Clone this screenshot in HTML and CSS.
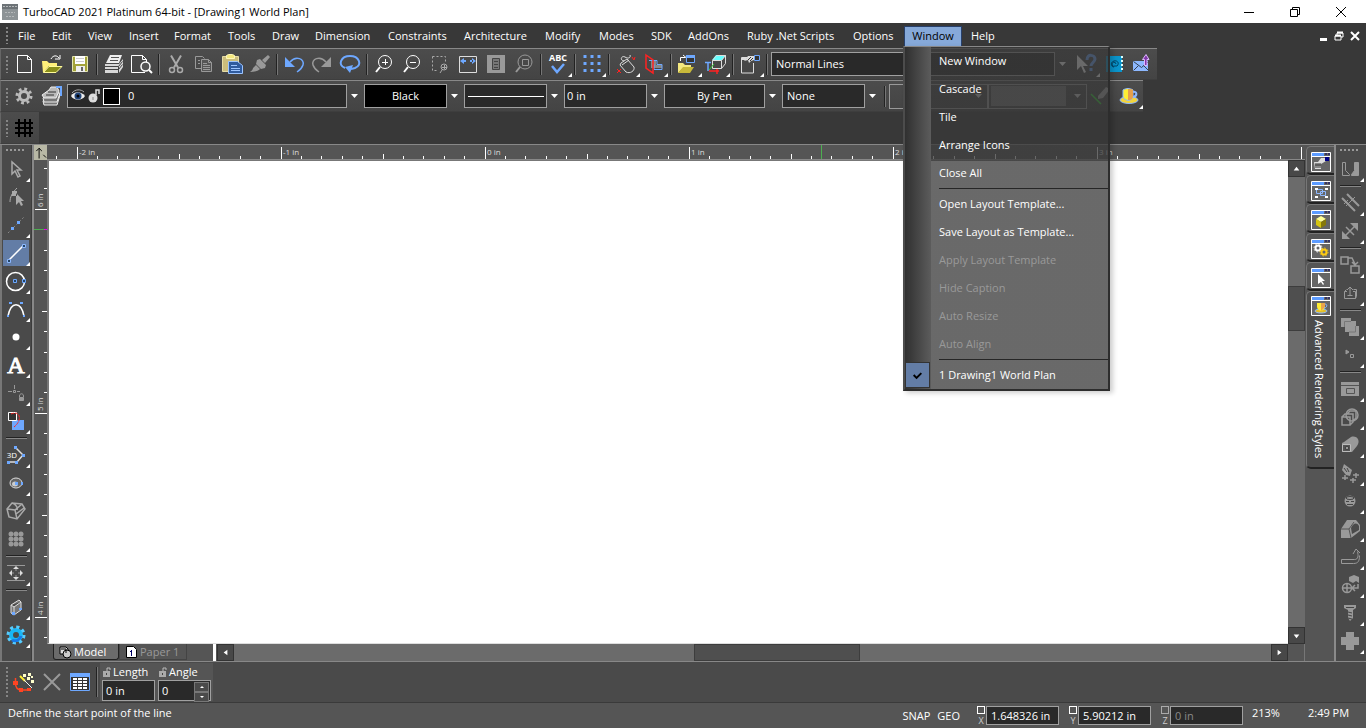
FILE: index.html
```html
<!DOCTYPE html>
<html lang="en">
<head>
<meta charset="utf-8">
<title>TurboCAD 2021 Platinum 64-bit - [Drawing1 World Plan]</title>
<link rel="stylesheet" href="styles.css">
</head>
<body>
<header class="titlebar">
  <svg class="app-icon" viewBox="0 0 16 16"><path fill="#6d7377" d="M0 0h16v5H0z"/><path fill="#8d9396" d="M0 5h16v11H0z"/><path stroke="#b5b8ba" d="M1 2.500h14M3 8.500h10M4 12.500h8" stroke-dasharray="2 1"/></svg>
  <h1>TurboCAD 2021 Platinum 64-bit - [Drawing1 World Plan]</h1>
  <div class="win-buttons">
    <button aria-label="Minimize"><svg viewBox="0 0 12 12"><path d="M1 6.500h10"/></svg></button>
    <button aria-label="Restore"><svg viewBox="0 0 12 12"><path d="M1.500 3.500h7v7h-7zM3.500 3.500v-2h7v7h-2"/></svg></button>
    <button aria-label="Close"><svg viewBox="0 0 12 12"><path d="M1 1l10 10M11 1L1 11"/></svg></button>
  </div>
</header>

<nav class="menubar">
  <span class="grip"></span>
  <div class="menus">
    <button>File</button><button>Edit</button><button>View</button><button>Insert</button><button>Format</button><button>Tools</button><button>Draw</button><button>Dimension</button><button>Constraints</button><button>Architecture</button><button>Modify</button><button>Modes</button><button>SDK</button><button>AddOns</button><button>Ruby .Net Scripts</button><button>Options</button>
    <div class="open-menu">
      <button class="active">Window</button>
      <div class="dropdown" role="menu">
        <button role="menuitem">New Window</button>
        <button role="menuitem">Cascade</button>
        <button role="menuitem">Tile</button>
        <button role="menuitem">Arrange Icons</button>
        <button role="menuitem">Close All</button>
        <hr>
        <button role="menuitem">Open Layout Template...</button>
        <button role="menuitem">Save Layout as Template...</button>
        <button role="menuitem" disabled>Apply Layout Template</button>
        <button role="menuitem" disabled>Hide Caption</button>
        <button role="menuitem" disabled>Auto Resize</button>
        <button role="menuitem" disabled>Auto Align</button>
        <hr>
        <button role="menuitem" class="checked"><svg viewBox="0 0 24 24"><path d="M8 12l3 3 5-5" fill="none" stroke="#000" stroke-width="2"/></svg>1 Drawing1 World Plan</button>
      </div>
    </div>
    <button>Help</button>
  </div>
  <div class="mdi">
    <button aria-label="Minimize drawing"><svg viewBox="0 0 12 12"><path d="M3 9.500h7" stroke-width="3"/></svg></button>
    <button aria-label="Restore drawing"><svg viewBox="0 0 12 12"><path d="M2 6h6v4H2zM4 5V3h6v4H8" stroke-width="1"/><path d="M2 5.500h6M4 2.500h6" stroke-width="2"/></svg></button>
    <button aria-label="Close drawing"><svg viewBox="0 0 12 12"><path d="M2 2l8 8M10 2l-8 8" stroke-width="2"/></svg></button>
  </div>
</nav>

<div class="toolbar standard">
  <span class="grip"></span>
  <button aria-label="New"><svg viewBox="0 0 24 24" stroke="#fff"><path d="M5.500 3.500h10l4 4v13h-14zM15.500 3.500v4h4"/></svg></button>
  <button aria-label="Open"><svg viewBox="0 0 24 24"><path fill="#fff07a" d="M2 9h5l2 2h8v3H9l-6 7z"/><path fill="#8b8f1a" stroke="#fffb9a" d="M9 14.500h13l-6 6H3.500z"/><path stroke="#fff" d="M11 7c2-4 6-4 8-1m-4 1h5V3"/></svg></button>
  <button aria-label="Save"><svg viewBox="0 0 24 24"><path fill="#a3a33a" stroke="#e6e6b0" d="M4.500 4.500h15v15h-15z"/><path fill="#fff" d="M7 4h10v8H7z"/><path stroke="#ccc" d="M8 6.500h8M8 9.500h8"/><path fill="#eee" d="M8 14h9v6H8z"/><path fill="#666" d="M13 15h2v4h-2z"/></svg></button>
  <i class="sep"></i>
  <button aria-label="Print"><svg viewBox="0 0 24 24"><path fill="#eee" d="M8 3h12l-3 8H4z"/><path stroke="#555" d="M9 5.500h8M8 8.500h8"/><path fill="#d8d8d8" d="M3 12h14l4-5v8l-4 6H3z"/><path stroke="#444" d="M3 14.500h13.500l4-5M3 17.500h13.500l4-5M16.500 14.500V21"/></svg></button>
  <button aria-label="Print preview"><svg viewBox="0 0 24 24" stroke="#fff"><path d="M15 20.500H1.500v-17h11l4 4v3M12.500 3.500v4h4"/><circle cx="15.500" cy="14.500" r="4.500" fill="#555" stroke-width="1.500"/><path d="M19 18l3 3" stroke-width="2"/></svg></button>
  <i class="sep"></i>
  <button aria-label="Cut"><svg viewBox="0 0 24 24" stroke="#aaa"><path stroke-width="2" d="M7 3.500l7 12M17 3.500l-7 12"/><circle cx="8" cy="18" r="2.500" stroke-width="1.500"/><circle cx="16" cy="18" r="2.500" stroke-width="1.500"/></svg></button>
  <button aria-label="Copy"><svg viewBox="0 0 24 24" stroke="#999"><path d="M9 16.500H3.500v-12h7l2 2"/><path fill="#555" d="M9.500 7.500h7l3 3v9h-10zM16.500 7.500v3h3M6 8.500h2M6 11.500h2M11 13.500h7M11 15.500h7M11 11.500h4M11 17.500h7"/></svg></button>
  <button aria-label="Paste"><svg viewBox="0 0 24 24"><path fill="#cbbd7c" stroke="#e6dca6" d="M2.500 4.500h16v15h-16z"/><path fill="#f4e87f" stroke="#fff8b8" d="M6.500 6.500v-3l2-1h4l2 1v3z"/><path fill="#2f5b9e" stroke="#9cc4ff" d="M8.500 9.500h9l5 4v8h-14z"/><path stroke="#9cc4ff" d="M11 13.500h6M11 16.500h9M11 18.500h9"/></svg></button>
  <button aria-label="Format painter"><svg viewBox="0 0 24 24"><path fill="#999" d="M20 3l2 2-5 6-3-3zM9 8l3-1 6 6-1 3-4 1-5-5zM8 13l4 4c-2 2-6 3-10 3 1-1 3-2 3-4z"/></svg></button>
  <i class="sep"></i>
  <button aria-label="Undo"><svg viewBox="0 0 24 24"><path d="M8 10c6-7 15-3 13 3-1 3-3 5-6 7" stroke="#6ea8ff" stroke-width="1.500"/><path fill="#6ea8ff" d="M3 5v10h10z"/></svg></button>
  <button aria-label="Redo"><svg viewBox="0 0 24 24"><path d="M16 10C10 3 1 7 3 13c1 3 3 5 6 7" stroke="#999" stroke-width="1.500"/><path fill="#999" d="M21 5v10H11z"/></svg></button>
  <button aria-label="Repeat"><svg viewBox="0 0 24 24"><path d="M7 16C-1 13 3 4 12 4s13 9 5 12l-4 1" stroke="#6ea8ff" stroke-width="2"/><path fill="#6ea8ff" d="M7 15l8-2-3 8z"/></svg></button>
  <i class="sep"></i>
  <button aria-label="Zoom in"><svg viewBox="0 0 24 24" stroke="#fff"><circle cx="13" cy="10" r="6.500"/><path d="M10 10.500h6M13.500 7v6"/><path stroke-width="2" d="M8 15l-4 5"/></svg></button>
  <button aria-label="Zoom out"><svg viewBox="0 0 24 24" stroke="#fff"><circle cx="13" cy="10" r="6.500"/><path d="M10 10.500h6"/><path stroke-width="2" d="M8 15l-4 5"/></svg></button>
  <button aria-label="Zoom window"><svg viewBox="0 0 24 24" stroke="#aaa"><path stroke-dasharray="2 2" d="M4.500 4.500h13v6M4.500 4.500v14h6"/><circle cx="16" cy="15" r="3"/><path d="M16.500 13v4M14 15.500h5M14 18l-2 3"/></svg></button>
  <button aria-label="Zoom extents"><svg viewBox="0 0 24 24"><path stroke="#ddd" d="M3.500 4.500h17v16h-17z"/><path fill="#6ea8ff" d="M4 9l4-3v6zM20 9l-4-3v6zM7 8h3v2H7zM14 8h3v2h-3z"/></svg></button>
  <button aria-label="Full page"><svg viewBox="0 0 24 24"><path fill="#999" d="M3 3h18v18H3z"/><path fill="#777" stroke="#444" d="M8.500 6.500h7v11h-7zM10 9.500h4M10 12.500h4M10 15.500h4"/></svg></button>
  <button aria-label="Zoom selection"><svg viewBox="0 0 24 24" stroke="#999"><circle cx="13" cy="10" r="7"/><path d="M10.500 7.500h6v6h-6z"/><path stroke-width="2" d="M8 15l-4 5"/></svg></button>
  <i class="sep"></i>
  <button class="fly" aria-label="Spelling"><svg viewBox="0 0 24 24"><text x="12" y="9" class="abc">ABC</text><path d="M6 14l5 6 7-8" stroke="#6ea8ff" stroke-width="2.500"/></svg></button>
  <i class="sep"></i>
  <button class="fly" aria-label="Grid"><svg viewBox="0 0 24 24"><path stroke="#6ea8ff" stroke-width="3" stroke-dasharray="3 4" d="M3.500 4.500h18M3.500 11.500h18M3.500 18.500h18"/></svg></button>
  <i class="sep"></i>
  <button class="fly" aria-label="Mouse setup"><svg viewBox="0 0 24 24" stroke="#ddd"><path d="M7 11l6-4 7 8c1 4-4 7-8 5l-6-7zM8 13l7-5M10 9C5 8 8 3 11 5s6 1 5-2"/><path stroke="#f22" d="M18 5l2 3 1-3M3 17l4 4M7 17l-4 4"/></svg></button>
  <button class="fly" aria-label="Section"><svg viewBox="0 0 24 24"><path fill="#888" d="M9 9h5v4h6v3H9z"/><path stroke="#6ea8ff" d="M7 8.500h8v4h5v5h-8v-5"/><path stroke="#f22" stroke-width="1.500" d="M4 3l7 5v13l-7-5z"/></svg></button>
  <i class="sep"></i>
  <button class="fly" aria-label="Insert file"><svg viewBox="0 0 24 24"><path fill="#f4e87f" d="M2 11h5l2 2h6v2H8l-6 6z"/><path fill="#c8b93a" d="M7 15h11l-4 6H2z"/><path fill="#333" stroke="#6ea8ff" d="M10.500 3.500h8v7h-8z"/><path fill="#6ea8ff" d="M10 3h9v3h-9z"/><path stroke="#fff" d="M4.500 9V5.500h5M7 3l3 2.500"/></svg></button>
  <button class="fly" aria-label="Work plane"><svg viewBox="0 0 24 24"><path fill="#6ff" d="M12 3h10l-4 5H8z"/><path stroke="#ddd" d="M8.500 8.500h9v8h-9zM8.500 8.500l4-5h9v8l-4 5M21.500 3.500l-4 5"/><path stroke="#6ea8ff" stroke-width="1.500" d="M4 19V10M1 10.500h6"/><path stroke="#f22" stroke-width="1.500" d="M5 19h10M13 17v5"/><path stroke="#3c3" d="M5 18l5-6"/></svg></button>
  <i class="sep"></i>
  <button class="fly" aria-label="Properties"><svg viewBox="0 0 24 24"><path stroke="#ddd" d="M15.500 11v10h-12V5.500H10"/><path stroke="#ddd" stroke-width="2" d="M3 7h5"/><path fill="#ddd" d="M6 9l4-5h6v4l-3 1-2 2-1-3z"/><path fill="#333" stroke="#6ea8ff" d="M16.500 3.500h5v5h-5z"/><path stroke="#333" d="M10 8l3-3M12 9l3-3"/></svg></button>
  <i class="sep"></i>
  <label class="combo style-combo"><select aria-label="Style"><option>Normal Lines</option></select></label>
  <button class="fly" aria-label="Context help"><svg viewBox="0 0 24 24"><path fill="#fff" d="M3 3v15l4-4 3 7 2-1-3-6h5z"/><path stroke="#6ea8ff" stroke-width="3" d="M13 8c0-7 8-5 8-1 0 3-4 4-4 7M17 16v3"/></svg></button>
  <button aria-label="Content center"><svg viewBox="0 0 24 24"><path fill="#0a95cc" d="M4 4h16v16H4z"/><path stroke="#dff" stroke-width="2" stroke-dasharray="2 2" d="M20 4v16"/><path stroke="#046" d="M14 12a2 2 0 1 0-1 2h2c3-3 0-6-3-5-4 1-3 6 0 6"/></svg></button>
  <button aria-label="Send mail"><svg viewBox="0 0 24 24"><path fill="#8db8ff" d="M3 9h15v10H3z"/><path stroke="#345" d="M3.500 9.500l8 6 7-6M3.500 18.500l5-5M18.500 18.500l-5-5"/><path fill="#8036a8" stroke="#dcb8ff" d="M14.500 13.500v-6h-2l3.500-5 3 5h-2v6z"/></svg></button>
</div>

<div class="toolbar properties">
  <span class="grip"></span>
  <button aria-label="Settings"><svg viewBox="0 0 24 24"><circle cx="12" cy="12" r="4.500" stroke="#bbb" stroke-width="3"/><circle cx="12" cy="12" r="7" stroke="#bbb" stroke-width="3" stroke-dasharray="2.750 2.750"/></svg></button>
  <button aria-label="Layers"><svg viewBox="0 0 24 24"><path fill="#777" stroke="#eee" d="M3 17l5-6h12l-3 10H4z"/><path fill="#777" stroke="#eee" d="M3 14l5-5h12l-3 9H4z"/><path fill="#bbb" stroke="#eee" d="M2 11l7-5 2-3h6l2 4-3 7H4z"/><path stroke="#333" d="M6 11h8M8 8h8"/><path stroke="#6ea8ff" stroke-width="2" d="M16 3h5v9"/></svg></button>
  <label class="combo layer-combo">
    <span class="layer-state">
      <svg viewBox="0 0 16 16"><path fill="#eee" d="M1 8c3-5 10-5 14 0-3 5-11 5-14 0z"/><circle cx="8" cy="8" r="3.500" fill="#247"/><circle cx="8" cy="8" r="1.500" fill="#000"/><path stroke="#aaa" d="M2 5c3-4 9-4 12-1"/></svg>
      <svg viewBox="0 0 16 16"><circle cx="7" cy="10" r="4.500" fill="#ddd"/><path d="M10 7V2h3v4" stroke="#ddd" stroke-width="1.500"/><path d="M7 9v3" stroke="#888"/></svg>
      <i class="swatch"></i>
    </span>
    <select aria-label="Layer"><option>0</option></select></label>
  <label class="combo pen-color"><select aria-label="Pen color"><option>Black</option></select></label>
  <label class="combo pen-pattern"><select aria-label="Pen pattern"><option></option></select></label>
  <label class="combo pen-width"><select aria-label="Pen width"><option>0 in</option></select></label>
  <label class="combo brush-color"><select aria-label="Brush color"><option>By Pen</option></select></label>
  <label class="combo brush-pattern"><select aria-label="Brush pattern"><option>None</option></select></label>
  <i class="sep"></i>
  <label class="boxed"><select aria-label="Material"><option></option></select></label>
  <label class="boxed filled"><select aria-label="Luminance"><option></option></select></label>
  <button aria-label="Pick style"><svg viewBox="0 0 24 24"><path fill="#aaa" d="M9 12l8-9 4 2-7 9-5 1z"/><path stroke="#3d3" stroke-width="1.500" d="M2 10l10 10"/></svg></button>
  <button class="fly" aria-label="Render"><svg viewBox="0 0 24 24"><ellipse cx="12" cy="16" rx="9" ry="3.500" fill="#f3d43b" stroke="#8db8ff"/><path fill="#fe3" stroke="#8db8ff" d="M6 6c3-2 7-2 10 0v7c-2 5-8 4-10 0z"/><path fill="#e5a04c" d="M11 5c2 0 4 0 5 1v7c-1 3-3 3-5 3z"/><path stroke="#8db8ff" stroke-width="2" d="M16 8c4-1 5 4 0 5"/></svg></button>
</div>

<div class="toolbar gridbar">
  <span class="grip"></span>
  <button aria-label="Toggle grid"><svg viewBox="0 0 24 24"><path stroke="#000" stroke-width="2" d="M7 3v18M13 3v18M18 3v18M3 7h18M3 12h18M3 17h18"/></svg></button>
</div>

<main>
  <aside class="tools left">
    <span class="grip across"></span>
    <button class="fly" aria-label="Select"><svg viewBox="0 0 24 24" stroke="#aaa"><path stroke-width="1.500" d="M8 5v12l3-3 3 6 2-1-3-6h4z"/></svg></button>
    <button aria-label="Edit node"><svg viewBox="0 0 24 24" stroke="#aaa"><path d="M6 17c0-5 2-9 7-14"/><path fill="#aaa" stroke="none" d="M8 6h5v5H8zM12 8v12l3-3 2 4 2-1-2-4h3z"/></svg></button>
    <button class="fly" aria-label="Construction line"><svg viewBox="0 0 24 24"><path stroke="#888" stroke-dasharray="2 2" d="M4 20L20 4"/><path fill="#6ea8ff" d="M7 14h3v3H7zM13 8h3v3h-3z"/></svg></button>
    <button class="fly selected" aria-label="Line"><svg viewBox="0 0 24 24"><path stroke="#fff" stroke-width="1.500" d="M5 19L19 5"/><path fill="#246" stroke="#8db8ff" d="M3.500 18.500h3v3h-3zM18.500 3.500h3v3h-3z"/></svg></button>
    <button class="fly" aria-label="Circle"><svg viewBox="0 0 24 24"><circle cx="11.500" cy="12.500" r="9" stroke="#fff" stroke-width="1.500"/><path fill="#246" stroke="#6ea8ff" d="M9.500 10.500h3v3h-3zM18.500 10.500h3v3h-3z"/></svg></button>
    <button class="fly" aria-label="Curve"><svg viewBox="0 0 24 24"><path stroke="#fff" stroke-width="1.500" d="M4 19C7 4 17 4 20 19"/><path fill="#6ea8ff" d="M3 18h2v2H3zM19 18h2v2h-2zM5 5h3v2H5zM16 5h3v2h-3z"/></svg></button>
    <button class="fly" aria-label="Point"><svg viewBox="0 0 24 24"><circle cx="12" cy="12" r="3.500" fill="#fff"/></svg></button>
    <button class="fly" aria-label="Text"><span class="letter-a">A</span></button>
    <button class="fly" aria-label="Constraint"><svg viewBox="0 0 24 24" stroke="#999"><path d="M4 10.500h4M10.500 4v4M13 10.500h3M9.500 9.500h2v2h-2z"/><path d="M15.500 16v-1c0-3 4-3 4 0v1"/><path fill="#999" d="M15.500 16.500h4v3h-4z"/></svg></button>
    <button class="fly" aria-label="Modify"><svg viewBox="0 0 24 24"><path fill="#6ea8ff" d="M8 11h12v10H8z"/><path fill="#333" stroke="#fff" d="M4.500 3.500h8v8h-8z"/><path stroke="#f22" d="M7 5c9-4 12 6 3 13" stroke-dasharray="3 1"/></svg></button>
    <i class="rule"></i>
    <button class="fly" aria-label="3D polyline"><svg viewBox="0 0 24 24"><path stroke="#ddd" stroke-width="1.500" d="M4 19h9l6-7-7-7"/><path fill="#6ea8ff" d="M3 18h3v3H3zM11 18h3v3h-3zM18 11h3v3h-3zM10 3h3v3h-3z"/><text x="8" y="15" class="three-d">3D</text></svg></button>
    <button class="fly" aria-label="Sphere"><svg viewBox="0 0 24 24"><ellipse cx="12" cy="12" rx="6" ry="5" fill="#666" stroke="#ddd"/><ellipse cx="11" cy="13" rx="3" ry="2.500" fill="#ccc"/><path fill="#6ea8ff" d="M11 11h3v3h-3zM17 11h2v3h-2z"/></svg></button>
    <button class="fly" aria-label="Surface"><svg viewBox="0 0 24 24" stroke="#aaa" stroke-width="1.500"><path d="M3 10l5-6 10 1 3 5-8 10-8-2zM3 10l8 1 2 9M11 11l7-6M8 4c4 1 6 5 5 7M12 15l8-6"/></svg></button>
    <button class="fly" aria-label="Pattern"><svg viewBox="0 0 24 24" fill="#999"><circle cx="7" cy="7" r="2.500"/><circle cx="12" cy="7" r="2.500"/><circle cx="17" cy="7" r="2.500"/><circle cx="7" cy="12" r="2.500"/><circle cx="12" cy="12" r="2.500"/><circle cx="17" cy="12" r="2.500"/><circle cx="7" cy="17" r="2.500"/><circle cx="12" cy="17" r="2.500"/><circle cx="17" cy="17" r="2.500"/></svg></button>
    <i class="rule"></i>
    <button class="fly" aria-label="Align"><svg viewBox="0 0 24 24" stroke="#999"><path d="M3 4.500h18M3 19.500h18M6 12h4M14 12h4M12 6v4M12 14v4"/><path fill="#ddd" stroke="none" d="M9 8l3-3 3 3zM9 16l3 3 3-3zM8 9l-3 3 3 3zM16 9l3 3-3 3z"/></svg></button>
    <i class="rule"></i>
    <button class="fly" aria-label="Wall"><svg viewBox="0 0 24 24"><path fill="#777" stroke="#ddd" d="M7 10l8-5 2 2v8l-7 5-3-2zM10 12v8M7 10l3 2 7-5"/><path fill="#6ea8ff" d="M8 17h3v3H8zM15 13h3v2h-3z"/></svg></button>
    <button class="fly" aria-label="Mechanism"><svg viewBox="0 0 24 24"><circle cx="12" cy="12" r="5" stroke="#18b6f5" stroke-width="4"/><circle cx="12" cy="12" r="8" stroke="#5cf" stroke-width="3" stroke-dasharray="3.150 3.133"/><path stroke="#1678e8" stroke-width="3" d="M8 17c4 2 8 0 9-4"/></svg></button>
  </aside>

  <section class="drawing">
    <div class="corner"><svg viewBox="0 0 14 14"><path d="M5.500 14V3M2.500 6l3-3 3 3" stroke="#000"/><path d="M10 10l3 3" stroke="#000"/></svg></div>
    <div class="ruler-h">
      <svg aria-label="Horizontal ruler">
        <defs>
          <path id="inch-h" d="M.5 2v12M20.500 11v3M40.500 11v3M61.500 11v3M81.500 11v3M102.500 9v5M122.500 11v3M142.500 11v3M163.500 11v3M183.500 11v3"/>
          <path id="inch-v" d="M1 .5h12M10 20.500h3M10 41.500h3M10 61.500h3M10 81.500h3M8 102.500h5M10 122.500h3M10 143.500h3M10 163.500h3M10 183.500h3"/>
        </defs>
        <g stroke="#fff"><use href="#inch-h" x="-174"/><use href="#inch-h" x="30"/><use href="#inch-h" x="234"/><use href="#inch-h" x="438"/><use href="#inch-h" x="642"/><use href="#inch-h" x="846"/><use href="#inch-h" x="1050"/><use href="#inch-h" x="1254"/></g>
        <path stroke="#4caf50" d="M774.500 0v14"/>
        <g class="ruler-text"><text x="32" y="10">-2 in</text><text x="236" y="10">-1 in</text><text x="440" y="10">0 in</text><text x="644" y="10">1 in</text><text x="848" y="10">2 in</text><text x="1052" y="10">3 in</text></g>
      </svg>
    </div>
    <div class="ruler-v">
      <svg aria-label="Vertical ruler">
        <g stroke="#fff"><use href="#inch-v" y="-155"/><use href="#inch-v" y="49"/><use href="#inch-v" y="253"/><use href="#inch-v" y="457"/></g>
        <path stroke="#4caf50" d="M0 69.500h10"/><path stroke="#e0e" d="M10 69.500h3"/>
        <g class="ruler-text"><text transform="translate(9 47) rotate(-90)">6 in</text><text transform="translate(9 251) rotate(-90)">5 in</text><text transform="translate(9 455) rotate(-90)">4 in</text></g>
      </svg>
    </div>
    <div class="canvas"></div>
    <div class="vscroll">
      <button aria-label="Scroll up"><svg viewBox="0 0 16 16"><path d="M5 10l3-4 3 4z"/></svg></button>
      <i class="before"></i><i class="thumb"></i><i class="after"></i>
      <button aria-label="Scroll down"><svg viewBox="0 0 16 16"><path d="M5 7l3 4 3-4z"/></svg></button>
    </div>
    <div class="sheetbar">
      <div class="sheets">
        <button class="current"><svg viewBox="0 0 14 14"><path fill="#ddd" stroke="#000" d="M2 2h6l2 2v5H2z"/><circle cx="9" cy="9" r="4" fill="#ccc" stroke="#000"/><path stroke="#000" d="M3 4h5v4"/></svg>Model</button>
        <button><svg viewBox="0 0 14 14"><path fill="#fff" stroke="#000" d="M2.500 1.500h7l3 3v8h-10z"/><path stroke="#006" d="M7.500 5v6M6 6.500h2"/></svg>Paper 1</button>
      </div>
      <div class="hscroll">
        <button aria-label="Scroll left"><svg viewBox="0 0 16 16"><path d="M10 5L6 8l4 3z"/></svg></button>
        <i class="before"></i><i class="thumb"></i><i class="after"></i>
        <button aria-label="Scroll right"><svg viewBox="0 0 16 16"><path d="M6 5l4 3-4 3z"/></svg></button>
      </div>
      <i class="size-corner"></i>
    </div>
  </section>

  <aside class="dock">
    <button aria-label="Selection info"><svg viewBox="0 0 20 20"><use href="#pane"/><path fill="#ddd" d="M3 10h4l3-4h5v3l-5 3v5H4z"/><path fill="#008" d="M14 5h4v4h-4z"/><path stroke="#333" d="M5 11v5M7 11v5M9 11v5M4 13h6"/></svg></button>
    <button aria-label="Blocks"><svg viewBox="0 0 20 20"><use href="#pane"/><path stroke="#8db8ff" d="M5.500 8.500h6v4h-6zM9.500 10.500h5v4h-5z"/><path fill="#fff" d="M4 7h3v2H4zM14 7h3v2h-3zM4 15h3v2H4zM14 15h3v2h-3z"/></svg></button>
    <button aria-label="Library"><svg viewBox="0 0 20 20"><use href="#pane"/><path fill="#ff9" d="M5 9l5-3 5 3-5 3z"/><path fill="#d4c411" d="M5 9l5 3v6l-5-3z"/><path fill="#86790b" d="M15 9l-5 3v6l5-3z"/></svg></button>
    <button aria-label="Internet palette"><svg viewBox="0 0 20 20"><use href="#pane"/><circle cx="7" cy="9" r="2.500" stroke="#fff" stroke-width="2"/><circle cx="7" cy="9" r="4" stroke="#fff" stroke-dasharray="1.500 1.600"/><circle cx="13" cy="13" r="2.500" stroke="#fc1" stroke-width="2"/><circle cx="13" cy="13" r="4" stroke="#fc1" stroke-dasharray="1.500 1.600"/></svg></button>
    <button aria-label="Selector"><svg viewBox="0 0 20 20"><use href="#pane"/><path fill="#fff" d="M7 6v10l3-2 2 3 1-1-2-3h3z"/></svg></button>
    <button class="current"><svg viewBox="0 0 20 20"><defs><g id="pane"><path fill="#666" stroke="#fff" d="M.5.5h19v19H.5z"/><path fill="#5c9bff" d="M1 1h12v3H1z"/><path fill="#336" d="M14 1h2v2h-2zM17 1h2v2h-2z"/><path stroke="#fff" d="M1 4.500h18"/></g></defs><use href="#pane"/><ellipse cx="10" cy="15" rx="6" ry="2" fill="#e3bd28" stroke="#8db8ff"/><path fill="#fe3" d="M6 7h8v4c-1 5-7 5-8 0z"/><path fill="#e9a34b" d="M10 7h4v4l-4 4z"/><path stroke="#8db8ff" d="M14 8c3 0 2 4-1 4"/></svg><span>Advanced Rendering Styles</span></button>
  </aside>

  <aside class="tools right">
    <span class="grip across"></span>
    <button class="fly" aria-label="Join"><svg viewBox="0 0 24 24" stroke="#999"><path d="M4.500 5.500h3v8l4 4v1h-7z"/><path fill="#999" d="M16.500 5.500h4v13h-7v-1l3-4z"/></svg></button>
    <i class="rule"></i>
    <button class="fly" aria-label="Trim"><svg viewBox="0 0 24 24" stroke="#999"><path stroke-width="2" d="M4 7l13 13M9 3l12 12"/><path d="M8 15l9-9M10 9l-4 4"/></svg></button>
    <button class="fly" aria-label="Stretch"><svg viewBox="0 0 24 24"><path stroke="#999" stroke-width="1.500" d="M6 18L18 6M8 8l8 8"/><path fill="#999" d="M4 12v8h8zM12 4h8v8z"/></svg></button>
    <i class="rule"></i>
    <button class="fly" aria-label="Copy entity"><svg viewBox="0 0 24 24" stroke="#999" stroke-width="1.500"><path d="M3 4h7v7H3zM13 13h8v7h-8zM10 5h4l3 6M14 9l3 3 3-3"/></svg></button>
    <button class="fly" aria-label="Extrude"><svg viewBox="0 0 24 24" stroke="#999"><path d="M9 10.500H6.500v7h11v-7H15M6.500 10.500l2-2M17.500 17.500l1-2v-7h-3M9.500 14.500h5M12 14V6M9 9l3-3 3 3"/></svg></button>
    <i class="rule"></i>
    <button class="fly" aria-label="Union"><svg viewBox="0 0 24 24" fill="#999"><path d="M3 3h10v3h5v5h3v10H11v-4H7v-5H3z"/><path stroke="#777" d="M6.500 12V6.500H13M17.500 11v6H11"/></svg></button>
    <button class="fly" aria-label="Snap node"><svg viewBox="0 0 24 24" stroke="#999"><path fill="#999" d="M8 7l3 2-3 2z"/><path d="M12.500 11.500h3v3h-3z"/></svg></button>
    <i class="rule"></i>
    <button class="fly" aria-label="Panel"><svg viewBox="0 0 24 24"><path fill="#999" d="M3 5h18v14H3z"/><path stroke="#555" d="M3 8.500h18M8.500 11.500h8v5h-8z"/></svg></button>
    <button class="fly" aria-label="Chamfer"><svg viewBox="0 0 24 24" stroke="#999" stroke-width="1.500"><circle cx="14" cy="10" r="6"/><path d="M4 12h8v8H4zM4 12l3-3h8v8l-3 3M9 9l3-3h6v7l-3 3"/></svg></button>
    <button class="fly" aria-label="Cylinder"><svg viewBox="0 0 24 24"><path fill="#999" d="M6 9l7-5c6-2 10 4 6 9l-5 6H4v-9z"/><path fill="#555" stroke="#bbb" d="M4.500 11.500h8v7h-8z"/><path fill="#999" stroke="#444" d="M7.500 13.500h3v3h-3z"/></svg></button>
    <button class="fly" aria-label="Stamp"><svg viewBox="0 0 24 24"><path fill="#999" d="M6 3l8 6-2 6-4-1-4-5z"/><path stroke="#444" d="M6 7l3 4M9 7l2 4"/><path stroke="#999" stroke-width="1.500" d="M7 14v5M4 17h6M18 12v5M15 14h6M15 17v5M12 19h6"/></svg></button>
    <button class="fly" aria-label="Material"><svg viewBox="0 0 24 24"><circle cx="12" cy="12" r="5.500" fill="#999"/><ellipse cx="12" cy="9" rx="4" ry="1.500" stroke="#444"/><path stroke="#444" d="M8 12.500h3M13 12.500h3M9 15.500h6"/></svg></button>
    <button class="fly" aria-label="Shell"><svg viewBox="0 0 24 24"><path fill="#999" d="M3 12l6-9h9l4 5v6l-9 7H3z"/><path fill="#4a4a4a" d="M13 11c2-5 6-6 8-2v4l-7 4z"/><path stroke="#555" d="M3 12h8l2 9M11 12l5-7"/></svg></button>
    <button class="fly" aria-label="Bend"><svg viewBox="0 0 24 24" stroke="#999"><path d="M3.500 14.500h13c4 0 4-4 3-8M3.500 14.500v4h12c5 0 6-3 6-8M15 9l3-5 4 4"/></svg></button>
    <button class="fly" aria-label="Assemble"><svg viewBox="0 0 24 24"><path fill="#999" d="M11 4l5-2 5 2v6l-3-2-3 2-4-2z"/><circle cx="9" cy="15" r="4.500" stroke="#999" stroke-width="1.500"/><path stroke="#999" stroke-width="1.500" d="M9 11v8M5 15h8M20 11v4h-5M17 12l-3 3 3 3"/></svg></button>
    <button class="fly" aria-label="Fastener"><svg viewBox="0 0 24 24"><path fill="#999" d="M6 4h12v3l-3 2v8l-3 3-2-3V9L6 7z"/><path stroke="#444" d="M8 6.500h8M10 11l4 1M10 14l4 1M10 17l4 1"/></svg></button>
    <button class="fly" aria-label="Add"><svg viewBox="0 0 24 24"><path fill="#999" d="M8 3h8v5h5v8h-5v5H8v-5H3V8h5z"/></svg></button>
  </aside>
</main>

<div class="inspector">
  <span class="grip"></span>
  <button aria-label="Finish"><svg viewBox="0 0 24 24"><path stroke="#f42" stroke-width="1.500" d="M3.500 8v5c0 4 2 7 6 7h8"/><path fill="#f42" d="M1 11h5v4H1zM7 18h4v4H7zM15 18h4v3h-4z"/><path stroke="#fe3" stroke-width="2" d="M8 6l5 5"/><path stroke="#eee" d="M12 10l8 8"/><path fill="#ffc" d="M11 4h3v3h-3zM16 3h3v3h-3zM15 7h3v3h-3zM19 10h3v3h-3zM19 6h2v2h-2z"/></svg></button>
  <button aria-label="Cancel"><svg viewBox="0 0 24 24"><path stroke="#999" stroke-width="2" d="M4 4l16 16M20 4L4 20"/></svg></button>
  <button aria-label="Properties table"><svg viewBox="0 0 24 24"><path fill="#333" stroke="#6ea8ff" d="M2.500 3.500h19v17h-19z"/><path fill="#6ea8ff" d="M2 3h20v4H2z"/><path stroke="#fff" stroke-width="2" stroke-dasharray="4 1" d="M5 9h14M5 12h14M5 15h14M5 18h14"/></svg></button>
  <i class="sep"></i>
  <div class="fields">
    <div class="field"><label for="length"><svg viewBox="0 0 8 10"><path fill="#aaa" d="M0 4h7v6H0z"/><path d="M4 4V1h3v2" stroke="#bbb"/><path stroke="#444" d="M3.500 6v2"/></svg>Length</label><input id="length" value="0 in"></div>
    <div class="field"><label for="angle"><svg viewBox="0 0 8 10"><path fill="#aaa" d="M0 4h7v6H0z"/><path d="M4 4V1h3v2" stroke="#bbb"/><path stroke="#444" d="M3.500 6v2"/></svg>Angle</label>
      <div class="spin"><input id="angle" value="0"><span><button aria-label="Increase angle"><svg viewBox="0 0 8 8"><path d="M2 5l2-2 2 2z"/></svg></button><button aria-label="Decrease angle"><svg viewBox="0 0 8 8"><path d="M2 3l2 2 2-2z"/></svg></button></span></div></div>
  </div>
</div>

<footer class="status">
  <p>Define the start point of the line</p>
  <button>SNAP</button><button>GEO</button>
  <div class="coord"><label for="cx"><input type="checkbox" aria-label="Lock X">X</label><input id="cx" class="value" value="1.648326 in"></div>
  <div class="coord"><label for="cy"><input type="checkbox" aria-label="Lock Y">Y</label><input id="cy" class="value" value="5.90212 in"></div>
  <div class="coord off"><label for="cz"><input type="checkbox" aria-label="Lock Z">Z</label><input id="cz" class="value" value="0 in"></div>
  <span class="zoom">213%</span>
  <time>2:49 PM</time>
</footer>
</body>
</html>
```

FILE: styles.css
```css
:root {
  --bar: #4a4a4a;
  --dark: #383838;
  --mid: #555;
  --field: #292929;
  --edge: #888;
  --accent: #6ea8ff;
}
* { box-sizing: border-box; }
body {
  margin: 0;
  min-height: 100vh;
  display: flex;
  flex-direction: column;
  background: var(--dark);
  color: #fff;
  font: 11px/16px "Open Sans", "Noto Sans", sans-serif;
  overflow: hidden;
}
button, input, select {
  font: inherit;
  color: inherit;
  background: none;
  border: 0;
  border-radius: 0;
  margin: 0;
  padding: 0;
  appearance: none;
}
svg { display: block; flex: none; }
svg:not([fill]) { fill: none; }

/* Title bar */
.titlebar { display: flex; align-items: center; height: 23px; background: #fff; color: #000; padding-left: 2px; }
.app-icon { width: 16px; height: 16px; }
.titlebar h1 { flex: 1; margin: 0 0 0 5px; font-size: 11px; font-weight: 400; }
.win-buttons { display: flex; padding-right: 2px; }
.win-buttons button { width: 46px; height: 23px; display: grid; place-items: center; }
.win-buttons svg { width: 12px; height: 12px; stroke: #000; }

/* Menu bar */
.grip {
  flex: none;
  width: 10px;
  height: 17px;
  background: repeating-linear-gradient(#858585 0 2px, transparent 2px 4px) 6px 0 / 2px 17px no-repeat;
}
.menubar { display: flex; align-items: center; height: 25px; }
.menus {
  flex: 1;
  display: grid;
  grid-template-columns: 34px 36px 41px 45px 54px 44px 43px 73px 76px 81px 54px 52px 37px 59px 106px 59px 59px 60px;
  align-items: center;
}
.menus > button { padding-left: 8px; text-align: left; white-space: nowrap; }
.open-menu { position: relative; height: 20px; }
.open-menu .active { width: 58px; height: 20px; padding: 0; background: #86a9d9; border: 1px solid #28406b; border-bottom: 0; color: #000; }
.mdi { display: flex; padding-right: 3px; }
.mdi button { width: 16px; display: grid; place-items: center; }
.mdi svg { width: 12px; height: 12px; stroke: #fff; }

.dropdown {
  position: absolute;
  z-index: 5;
  top: 20px;
  left: -1px;
  width: 207px;
  border: 2px solid #2d2d2d;
  border-top: 1px solid var(--edge);
  border-left: 2px solid #4c4c4c;
  background: linear-gradient(90deg, #303030, #5c5c5c) 0 0 / 26px 100% no-repeat, linear-gradient(#383838c0, #383838c0) 26px 0 no-repeat;
  box-shadow: 3px 2px 5px #0003;
}
.dropdown button { display: flex; align-items: center; width: 100%; height: 28px; padding-left: 34px; text-align: left; white-space: nowrap; }
.dropdown button:disabled { color: #999; }
.dropdown hr { height: 1px; margin: 1px 0 1px 34px; border: 0; background: #262626; }
.dropdown .checked { padding-left: 0; gap: 9px; }
.checked svg { width: 25px; height: 26px; background: #637da6; border: 1px solid #333; }

/* Toolbars */
.toolbar { display: flex; align-items: center; align-self: flex-start; height: 32px; border-top: 1px solid var(--edge); border-left: 1px solid #666; border-bottom: 1px solid #3e3e3e; background: linear-gradient(#4c4c4c, #444); }
.toolbar .grip { width: 9px; background-position: 5px 0; }
.toolbar button, .inspector > button { width: 28px; height: 28px; display: grid; place-items: center; flex: none; }
.toolbar svg, .tools svg, .inspector > button svg { width: 24px; height: 24px; }
.standard { padding-right: 1px; }
.gridbar { border-top-color: #4c4c4c; padding-right: 1px; }
.sep { flex: none; width: 2px; height: 21px; margin: 0 2px; border-left: 1px solid #222; border-right: 1px solid #777; }
.fly { position: relative; }
.fly::after { content: ""; position: absolute; right: 0; bottom: 1px; width: 4px; height: 4px; background: #fff; clip-path: polygon(100% 0, 100% 100%, 0 100%); }
.abc { font: 700 9px "Open Sans", sans-serif; fill: #fff; text-anchor: middle; }

.combo { display: flex; align-items: center; height: 24px; flex: none; position: relative; }
.combo select { flex: 1; min-width: 0; height: 24px; padding: 0 4px; border: 1px solid #a0a0a0; background: var(--field); }
.combo::after { content: ""; width: 7px; height: 4px; margin: 0 6px 0 4px; background: #fff; clip-path: polygon(0 0, 100% 0, 50% 100%); }
.style-combo { width: 301px; margin-left: 1px; }
.layer-combo { width: 297px; margin-left: 1px; }
.layer-combo select { padding-left: 60px; }
.layer-state { position: absolute; left: 3px; display: flex; align-items: center; }
.layer-state svg { width: 16px; height: 16px; }
.swatch { width: 17px; height: 17px; margin-left: 1px; background: #000; border: 1px solid #fff; }
.pen-color, .pen-pattern, .pen-width { width: 100px; }
.pen-color select { background: #000; text-align-last: center; }
.pen-pattern select { background: linear-gradient(#fff, #fff) center / 76px 1px no-repeat var(--field); }
.pen-width select { padding-left: 2px; }
.brush-color { width: 118px; }
.brush-color select { text-align-last: center; }
.brush-pattern { width: 100px; }
.boxed { display: flex; align-items: center; width: 99px; height: 25px; border: 1px solid #999; margin-left: 1px; flex: none; }
.boxed select { flex: 1; min-width: 0; height: 20px; margin-left: 2px; }
.boxed::after { content: ""; width: 7px; height: 4px; margin: 0 5px 0 8px; background: #ccc; clip-path: polygon(0 0, 100% 0, 50% 100%); }
.boxed + .boxed { margin-left: 0; }
.filled select { background: #777; }

/* Work area */
main { flex: 1; display: flex; min-height: 0; border-top: 1px solid var(--edge); background: var(--mid); }
.tools { flex: none; width: 32px; display: flex; flex-direction: column; background: var(--bar); border-left: 2px solid #777; }
.left { border-right: 1px solid #3c3c3c; }
.right { border-left-color: #8a8a8a; }
.tools .across { width: 18px; height: 2px; margin: 4px 0 4px 4px; background: repeating-linear-gradient(90deg, #999 0 2px, transparent 2px 4px); }
.tools button { width: 28px; height: 28px; display: grid; place-items: center; flex: none; }
.tools .selected { background: linear-gradient(#637da6, #637da6) center / 26px 26px no-repeat; }
.rule { flex: none; height: 2px; width: 21px; margin: 2px 0 2px 4px; border-top: 1px solid #222; border-bottom: 1px solid #888; }
.letter-a { font: 24px/28px "Liberation Serif", serif; -webkit-text-stroke: 1px #fff; }
.three-d { font: 8px "Open Sans", sans-serif; fill: #fff; text-anchor: middle; }

.drawing {
  flex: 1;
  min-width: 0;
  display: grid;
  grid-template-columns: 13px 1fr 17px;
  grid-template-rows: 15px 1fr 17px;
  border-left: 2px solid var(--edge);
}
.corner { background: #b8b8a5; }
.corner svg { width: 13px; height: 14px; }
.ruler-h { grid-column: 2 / 4; border-bottom: 1px solid #888; }
.ruler-h, .ruler-v { overflow: hidden; background: var(--mid); }
.ruler-h svg, .ruler-v svg { width: 100%; height: 100%; shape-rendering: crispEdges; }
.ruler-text { font: 8px "Open Sans", sans-serif; fill: #ddd; }
.canvas { background: #fff; border: 1px solid #777; border-left-width: 2px; border-right: 0; border-bottom-color: #ddd; }
.vscroll, .hscroll { display: flex; background: #6b6b6b; }
.vscroll { flex-direction: column; }
.vscroll button, .hscroll button { flex: none; width: 17px; height: 17px; background: #484848; border: 1px solid #333; }
.vscroll svg, .hscroll svg { width: 15px; height: 15px; fill: #fff; }
.thumb { background: #4f4f4f; border: 1px solid #3d3d3d; }
.vscroll .before { flex: 109; }
.vscroll .thumb { flex: 44; }
.vscroll .after { flex: 297; }
.sheetbar { grid-column: 1 / -1; display: flex; }
.sheets { display: flex; width: 182px; padding-left: 19px; border-right: 3px solid #fff; }
.sheets button { display: flex; align-items: center; gap: 2px; width: 68px; height: 16px; padding-left: 4px; color: #999; border: 1px solid #444; border-top: 0; white-space: nowrap; }
.sheets .current { width: 66px; background: #6b6b6b; color: #fff; border-color: #222; border-radius: 0 0 3px 3px; }
.sheets svg { width: 14px; height: 14px; }
.hscroll { flex: 1; margin-left: 1px; }
.hscroll .before { flex: 461; }
.hscroll .thumb { flex: 165; }
.hscroll .after { flex: 412; }
.size-corner { width: 17px; border-right: 1px solid #777; }

.dock { flex: none; width: 29px; display: flex; flex-direction: column; align-items: flex-end; padding-top: 1px; }
.dock button { width: 28px; height: 29px; padding: 4px 0 0 4px; border: 1px solid #777; border-right: 0; border-bottom: 2px solid #222; border-radius: 5px 0 0 5px; flex: none; }
.dock svg { width: 20px; height: 20px; }
.dock .current { display: flex; flex-direction: column; align-items: flex-start; height: 178px; background: #4c4c4c; }
.dock span { writing-mode: vertical-rl; margin-top: 4px; line-height: 16px; white-space: nowrap; }

/* Inspector bar */
.inspector { flex: none; display: flex; align-items: center; height: 42px; background: var(--bar); border-top: 1px solid var(--edge); border-bottom: 1px solid #3a3a3a; }
.inspector > .grip { height: 30px; background-size: 2px 30px; }
.inspector > .sep { height: 30px; }
.fields { display: flex; gap: 3px; padding: 0 2px; height: 38px; background: var(--mid); }
.field label { display: flex; align-items: center; height: 17px; gap: 2px; padding: 1px 0 0 1px; white-space: nowrap; }
.field label svg { width: 8px; height: 10px; }
.field > input, .spin { width: 53px; height: 21px; padding-left: 3px; border: 1px solid #a0a0a0; background: var(--field); }
.spin { display: flex; justify-content: space-between; }
.spin input { width: 30px; }
.spin span { display: flex; flex-direction: column; padding: 1px; }
.spin button { flex: 1; display: grid; place-items: center; width: 15px; background: var(--bar); border: 1px solid #777; }
.spin svg { width: 8px; height: 8px; fill: #fff; }

/* Status bar */
.status { flex: none; display: flex; align-items: center; height: 25px; padding: 0 15px 0 8px; background: var(--mid); }
.status p { flex: 1; margin: 0 0 6px; }
.status > button { margin-right: 7px; }
.coord { display: flex; align-items: center; width: 83px; margin-left: 9px; }
.coord label { display: flex; flex-direction: column; align-items: center; width: 10px; color: #ccc; font-size: 9px; line-height: 9px; gap: 2px; }
.coord input[type="checkbox"] { width: 8px; height: 8px; border: 1px solid #fff; }
.coord .value { flex: 1; min-width: 0; height: 19px; padding-left: 4px; border: 1px solid #a0a0a0; background: var(--field); }
.coord.off .value { color: #888; }
.coord.off input[type="checkbox"] { border-color: #aaa; }
.zoom, time { margin-bottom: 6px; }
.zoom { width: 65px; padding-left: 9px; }
time { width: 43px; white-space: nowrap; }
```
